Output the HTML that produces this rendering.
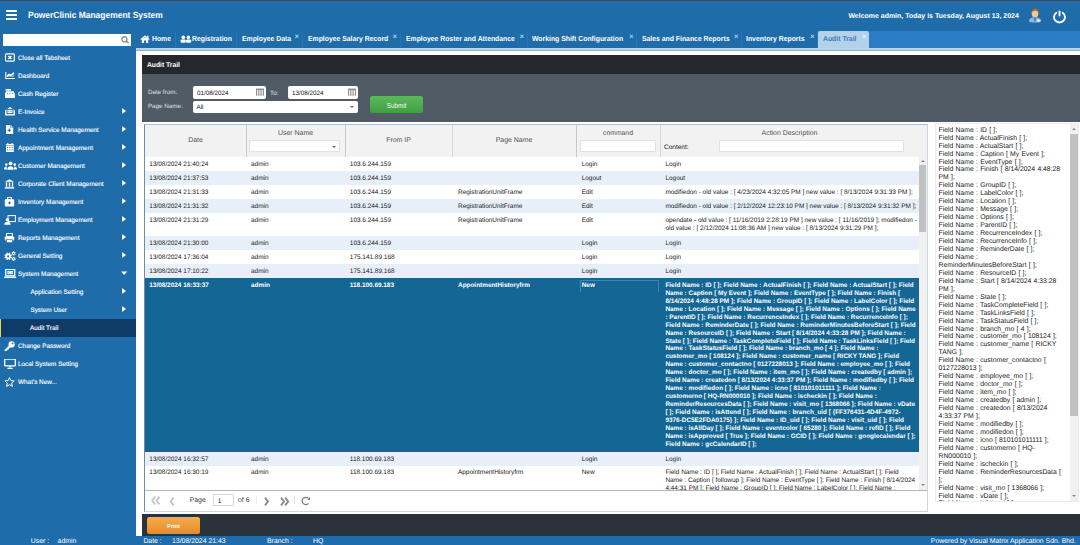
<!DOCTYPE html>
<html><head><meta charset="utf-8">
<style>
*{margin:0;padding:0;box-sizing:border-box}
html,body{width:1080px;height:545px;overflow:hidden;background:#fff}
body{font-family:"Liberation Sans",sans-serif;position:relative;text-rendering:geometricPrecision}
.a{position:absolute}
.t{position:absolute;white-space:nowrap;line-height:10px}
#hdr{left:0;top:0;width:1080px;height:31px;background:linear-gradient(#234f74 0,#234f74 1px,#35668c 1px,#35668c 2px,#2a6ca3 2px,#2a6ca3 3px,#1f6cab 3px)}
#side{left:0;top:31px;width:136px;height:505px;background:#1f6cab}
#tabs{left:136px;top:31px;width:944px;height:17px;background:#2a7cc6}
.tab{position:absolute;top:0;height:17px;background:#1f6cab;border-right:1px solid #2a74ba}
.tab span{position:absolute;top:2.8px;line-height:10px;font-size:7.3px;transform:scaleX(0.938);transform-origin:0 0;font-weight:bold;color:#fff;white-space:nowrap}
.tab i{position:absolute;top:1.9px;font-style:normal;font-size:8px;color:#dce9f6;line-height:8px}
.mi{position:absolute;left:0;width:136px;height:18px}
.mi span{position:absolute;left:18px;top:4.7px;line-height:10px;font-size:6.4px;color:#fff;white-space:nowrap;-webkit-text-stroke:0.12px #fff}
.mi svg{position:absolute;left:4px;top:4px}
.arr{position:absolute;left:121.9px;top:5.5px;width:0;height:0;border-top:3.5px solid transparent;border-bottom:3.5px solid transparent;border-left:4px solid #fff}
#status{left:0;top:535.5px;width:1080px;height:10px;background:#1f6cad}
#status .t{font-size:6.9px;color:#fff;top:1.1px;line-height:10px}
.row{position:absolute;left:145px;width:774px;height:14px}
.row span{position:absolute;top:3px;line-height:10px;font-size:6.45px;color:#1a1a1a;white-space:nowrap}
.alt{background:#e7eff8}
.sel{background:#146695}
.sel span{color:#fff;font-weight:bold;font-size:6.41px}
.ml span{line-height:8px}
</style></head><body>

<!-- header -->
<div id="hdr" class="a"></div>
<div class="a" style="left:5.8px;top:10px;width:11.4px;height:2px;background:#fff;border-radius:0.5px"></div>
<div class="a" style="left:5.8px;top:14px;width:11.4px;height:2px;background:#fff;border-radius:0.5px"></div>
<div class="a" style="left:5.8px;top:18px;width:11.4px;height:2px;background:#fff;border-radius:0.5px"></div>
<div class="t" style="left:27.5px;top:9.5px;font-size:9px;font-weight:bold;color:#fff;transform:scaleX(0.939);transform-origin:0 0">PowerClinic Management System</div>
<div class="t" style="left:848.4px;top:11.8px;font-size:6.98px;font-weight:bold;color:#fff">Welcome admin, Today is Tuesday, August 13, 2024</div>
<svg class="a" style="left:1028px;top:7px" width="14" height="17" viewBox="0 0 14 17">
  <path d="M0.9 14.2 Q1.2 11.4 4.6 10.6 L9.4 10.6 Q12.8 11.4 13.1 14.2 Q12.6 15.6 7 15.6 Q1.4 15.6 0.9 14.2 Z" fill="#8db6e6"/>
  <path d="M9.2 12.6 Q11.5 12.4 12.6 14 Q11.2 15.2 9 14.6 Z" fill="#eef5fc"/>
  <path d="M6.2 10.6 L7.8 10.6 L7.4 14.2 L6.6 14.2 Z" fill="#34557f"/>
  <ellipse cx="7" cy="6.6" rx="3.3" ry="4" fill="#f4c98c"/>
  <path d="M3.6 6.2 Q3.2 1.6 7 1.6 Q10.8 1.6 10.4 6.2 Q10 3.8 7.4 3.8 Q4.6 3.6 3.6 6.2 Z" fill="#b5692f"/>
</svg>
<svg class="a" style="left:1052px;top:9.4px" width="15" height="15" viewBox="0 0 15 15">
  <path d="M4.4 3.8 A5.5 5.3 0 1 0 10.6 3.8" fill="none" stroke="#fff" stroke-width="1.9" stroke-linecap="round"/>
  <line x1="7.5" y1="2.4" x2="7.5" y2="6.6" stroke="#fff" stroke-width="1.9" stroke-linecap="round"/>
</svg>

<!-- sidebar -->
<div id="side" class="a"></div>
<div class="a" style="left:2.6px;top:34px;width:128.4px;height:12px;background:#fff"></div>
<svg class="a" style="left:120px;top:35px" width="10" height="10" viewBox="0 0 10 10">
  <circle cx="4.4" cy="4.35" r="2.6" fill="none" stroke="#8a8a8a" stroke-width="1.3"/>
  <line x1="6.2" y1="6.2" x2="8.6" y2="7.9" stroke="#8a8a8a" stroke-width="1.6"/>
</svg>

<div id="menu">
<div class="mi" style="top:49px"><svg width="12" height="10" viewBox="0 0 12 10"><rect x="1.5" y="0.8" width="8.8" height="7.4" rx="1" fill="none" stroke="#fff" stroke-width="1.2"/><path d="M4.4 3 L7.4 6 M7.4 3 L4.4 6" stroke="#fff" stroke-width="1.4"/></svg><span>Close all Tabsheet</span></div>
<div class="mi" style="top:67px"><svg width="12" height="10" viewBox="0 0 12 10"><path d="M1.8 1 V7.5 H10.8" fill="none" stroke="#fff" stroke-width="1.1"/><path d="M3 5.6 L5 3.6 L6.8 4.8 L9.6 2.2 L9.6 1.6 L10.2 1.8 L10.2 6 L3 6 Z" fill="#fff" opacity="0.35"/><path d="M3 5.4 L5 3.4 L6.8 4.6 L9.8 1.8" fill="none" stroke="#fff" stroke-width="1.5"/></svg><span>Dashboard</span></div>
<div class="mi" style="top:85px"><svg width="12" height="10" viewBox="0 0 12 10"><rect x="1.6" y="0" width="5.4" height="1.6" fill="#fff"/><rect x="3.6" y="1.4" width="1.4" height="1.2" fill="#fff"/><path d="M1.8 2.3 H9.6 L10.9 5 V8.9 H1 V5 Z" fill="#fff"/><circle cx="3.6" cy="4.6" r="0.55" fill="#1f6cab"/><circle cx="5.9" cy="4.6" r="0.55" fill="#1f6cab"/><circle cx="8.2" cy="4.6" r="0.55" fill="#1f6cab"/></svg><span>Cash Register</span></div>
<div class="mi" style="top:103px"><svg width="12" height="10" viewBox="0 0 12 10"><path d="M1 3.6 L5.95 0.1 L10.9 3.6 V8.6 H1 Z" fill="#fff"/><rect x="3" y="2.4" width="5.9" height="4.2" fill="#fff" stroke="#1f6cab" stroke-width="1"/><rect x="4" y="3.8" width="3.9" height="0.9" fill="#1f6cab" opacity="0.6"/></svg><span>E-Invoice</span></div>
<div class="arr" style="top:107.6px"></div>
<div class="mi" style="top:121px"><svg width="12" height="10" viewBox="0 0 12 10"><path d="M2 0 H6.8 L9.2 2.4 V9 H2 Z" fill="#fff"/><path d="M6.6 0 V2.6 H9.2" fill="none" stroke="#1f6cab" stroke-width="0.6"/><path d="M7 5.3 H3.6 M5.3 3.6 V7" stroke="#1f6cab" stroke-width="1.1"/></svg><span>Health Service Management</span></div>
<div class="arr" style="top:125.6px"></div>
<div class="mi" style="top:139px"><svg width="12" height="10" viewBox="0 0 12 10"><rect x="2" y="1" width="7.8" height="8" rx="0.5" fill="#fff"/><rect x="3.2" y="0" width="1.2" height="1.8" fill="#fff"/><rect x="7.4" y="0" width="1.2" height="1.8" fill="#fff"/><path d="M2 2.6 H9.8" stroke="#1f6cab" stroke-width="0.5"/><g fill="#1f6cab"><rect x="3" y="4" width="1.2" height="0.9"/><rect x="5.3" y="4" width="1.2" height="0.9"/><rect x="7.6" y="4" width="1.2" height="0.9"/><rect x="3" y="6.4" width="1.2" height="0.9"/><rect x="5.3" y="6.4" width="1.2" height="0.9"/><rect x="7.6" y="6.4" width="1.2" height="0.9"/></g></svg><span>Appointment Management</span></div>
<div class="arr" style="top:143.6px"></div>
<div class="mi" style="top:157px"><svg width="13" height="10" viewBox="0 0 13 10"><circle cx="6.5" cy="2.4" r="1.9" fill="#fff"/><path d="M3.3 8.8 Q3.3 5.2 6.5 5.2 Q9.7 5.2 9.7 8.8 Z" fill="#fff"/><circle cx="2.3" cy="3.6" r="1.3" fill="#fff"/><circle cx="10.7" cy="3.6" r="1.3" fill="#fff"/><path d="M0 8.5 Q0 5.6 2.6 5.6 L3 8.5 Z M13 8.5 Q13 5.6 10.4 5.6 L10 8.5 Z" fill="#fff"/></svg><span>Customer Management</span></div>
<div class="arr" style="top:161.6px"></div>
<div class="mi" style="top:175px"><svg width="11" height="10" viewBox="0 0 11 10"><path d="M0.8 2.8 L5.5 0.3 L10.2 2.8 Z" fill="#fff"/><rect x="1.8" y="3.4" width="1.4" height="4.4" fill="#fff"/><rect x="4.8" y="3.4" width="1.4" height="4.4" fill="#fff"/><rect x="7.8" y="3.4" width="1.4" height="4.4" fill="#fff"/><rect x="0.8" y="8.2" width="9.4" height="1.4" fill="#fff"/></svg><span>Corporate Client Management</span></div>
<div class="arr" style="top:179.6px"></div>
<div class="mi" style="top:193px"><svg width="11" height="10" viewBox="0 0 11 10"><rect x="0.8" y="2.2" width="9.4" height="7.4" rx="0.8" fill="#fff"/><rect x="3.6" y="0.4" width="3.8" height="2.4" fill="none" stroke="#fff" stroke-width="1"/><path d="M5.5 4.2 L6.8 5.9 L5.5 7.6 L4.2 5.9 Z" fill="#1f6cab"/></svg><span>Inventory Management</span></div>
<div class="arr" style="top:197.6px"></div>
<div class="mi" style="top:211px"><svg width="12" height="10" viewBox="0 0 12 10"><rect x="4" y="0.6" width="7.4" height="6" fill="none" stroke="#fff" stroke-width="1"/><circle cx="3.4" cy="4.8" r="1.7" fill="#fff"/><path d="M0.2 9.8 Q0.2 6.8 3.4 6.8 Q6.6 6.8 6.6 9.8 Z" fill="#fff"/></svg><span>Employment Management</span></div>
<div class="arr" style="top:215.6px"></div>
<div class="mi" style="top:229px"><svg width="11" height="10" viewBox="0 0 11 10"><rect x="2.6" y="0.4" width="5.8" height="3" fill="none" stroke="#fff" stroke-width="1"/><rect x="0.8" y="3.6" width="9.4" height="4" rx="1" fill="#fff"/><rect x="2.6" y="6.4" width="5.8" height="3.2" fill="#fff" stroke="#1f6cab" stroke-width="0.6"/></svg><span>Reports Management</span></div>
<div class="arr" style="top:233.6px"></div>
<div class="mi" style="top:247px"><svg width="13" height="10" viewBox="0 0 13 10"><path d="M7.10 5.30 L7.07 5.74 L8.01 6.14 L7.48 7.40 L6.54 7.01 L6.25 7.35 L5.91 7.64 L6.30 8.58 L5.04 9.11 L4.64 8.17 L4.20 8.20 L3.76 8.17 L3.36 9.11 L2.10 8.58 L2.49 7.64 L2.15 7.35 L1.86 7.01 L0.92 7.40 L0.39 6.14 L1.33 5.74 L1.30 5.30 L1.33 4.86 L0.39 4.46 L0.92 3.20 L1.86 3.59 L2.15 3.25 L2.49 2.96 L2.10 2.02 L3.36 1.49 L3.76 2.43 L4.20 2.40 L4.64 2.43 L5.04 1.49 L6.30 2.02 L5.91 2.96 L6.25 3.25 L6.54 3.59 L7.48 3.20 L8.01 4.46 L7.07 4.86 Z" fill="#fff"/><circle cx="4.2" cy="5.3" r="1.1" fill="#1f6cab"/><path d="M11.10 2.40 L11.07 2.70 L11.71 3.02 L11.20 3.91 L10.60 3.52 L10.35 3.70 L10.07 3.82 L10.11 4.54 L9.09 4.54 L9.13 3.82 L8.85 3.70 L8.60 3.52 L8.00 3.91 L7.49 3.02 L8.13 2.70 L8.10 2.40 L8.13 2.10 L7.49 1.78 L8.00 0.89 L8.60 1.28 L8.85 1.10 L9.13 0.98 L9.09 0.26 L10.11 0.26 L10.07 0.98 L10.35 1.10 L10.60 1.28 L11.20 0.89 L11.71 1.78 L11.07 2.10 Z" fill="#fff"/><circle cx="9.6" cy="2.4" r="0.7" fill="#1f6cab"/><path d="M11.10 7.90 L11.07 8.20 L11.71 8.52 L11.20 9.41 L10.60 9.02 L10.35 9.20 L10.07 9.32 L10.11 10.04 L9.09 10.04 L9.13 9.32 L8.85 9.20 L8.60 9.02 L8.00 9.41 L7.49 8.52 L8.13 8.20 L8.10 7.90 L8.13 7.60 L7.49 7.28 L8.00 6.39 L8.60 6.78 L8.85 6.60 L9.13 6.48 L9.09 5.76 L10.11 5.76 L10.07 6.48 L10.35 6.60 L10.60 6.78 L11.20 6.39 L11.71 7.28 L11.07 7.60 Z" fill="#fff"/><circle cx="9.6" cy="7.9" r="0.7" fill="#1f6cab"/></svg><span>General Setting</span></div>
<div class="arr" style="top:251.6px"></div>
<div class="mi" style="top:265px"><svg width="13" height="10" viewBox="0 0 13 10"><rect x="1.7" y="0.4" width="9" height="6.4" fill="none" stroke="#fff" stroke-width="1.3"/><rect x="3.4" y="2" width="5.6" height="3.2" fill="#fff"/><path d="M5.4 2.6 L4.4 3.6 L5.4 4.6 M7 2.6 L8 3.6 L7 4.6" fill="none" stroke="#1f6cab" stroke-width="0.7"/><rect x="0.2" y="7.6" width="12" height="1.4" fill="#fff"/></svg><span>System Management</span></div>
<svg class="a" style="left:120px;top:270px" width="8" height="6" viewBox="0 0 8 6"><path d="M1.2 1.6 H7.2 L4.2 5 Z" fill="#fff"/></svg>
<div class="mi" style="top:283px"><span style="left:30.4px">Application Setting</span></div>
<div class="arr" style="top:287.6px"></div>
<div class="mi" style="top:301px"><span style="left:30.4px">System User</span></div>
<div class="arr" style="top:305.6px"></div>
<div class="mi" style="top:319px;background:#0f3b69;border-left:1.5px solid #e8d84a"><span style="left:28.9px">Audit Trail</span></div>
<div class="mi" style="top:337px"><svg width="12" height="10" viewBox="0 0 12 10"><circle cx="7.6" cy="3.4" r="3.1" fill="#fff"/><circle cx="8.6" cy="2.4" r="0.9" fill="#1f6cab"/><path d="M5.6 5.4 L1.6 9.2" stroke="#fff" stroke-width="2.1" stroke-linecap="round"/><path d="M3.2 7.8 L4.2 8.8" stroke="#fff" stroke-width="1.3"/></svg><span>Change Password</span></div>
<div class="mi" style="top:355px"><svg width="12" height="10" viewBox="0 0 12 10"><rect x="0.7" y="0.2" width="10.6" height="6.6" rx="0.6" fill="none" stroke="#fff" stroke-width="1.3"/><path d="M6 6.8 V8.6 M3.4 9.3 H8.6" stroke="#fff" stroke-width="1.3"/></svg><span>Local System Setting</span></div>
<div class="mi" style="top:373px"><svg width="11" height="10" viewBox="0 0 11 10"><path d="M5.5 0.6 L6.9 3.6 L10.2 3.9 L7.7 6.1 L8.4 9.4 L5.5 7.7 L2.6 9.4 L3.3 6.1 L0.8 3.9 L4.1 3.6 Z" fill="none" stroke="#fff" stroke-width="1"/></svg><span>What's New...</span></div>
</div>

<!-- tabs -->
<div id="tabs" class="a"></div>
<div class="a" style="left:136px;top:31px;width:944px;height:17px">
  <div class="tab" style="left:0;width:40px"><svg class="a" style="left:4px;top:4.4px" width="10" height="8" viewBox="0 0 10 8"><path d="M0.3 4.2 L5 0.2 L9.7 4.2 L8.8 5 L5 1.8 L1.2 5 Z" fill="#fff"/><path d="M1.8 4.4 L5 1.9 L8.2 4.4 V8 H6 V5.6 H4 V8 H1.8 Z" fill="#fff"/><rect x="7.2" y="0.6" width="1.2" height="2.4" fill="#fff"/></svg><span style="left:15.8px">Home</span></div>
  <div class="tab" style="left:40px;width:61px"><svg class="a" style="left:3.5px;top:4.4px" width="12" height="9" viewBox="0 0 12 9"><circle cx="3.3" cy="2.4" r="1.8" fill="#fff"/><circle cx="8.4" cy="2.4" r="1.8" fill="#fff"/><rect x="0.6" y="4.4" width="5.2" height="3.4" rx="1.2" fill="#fff"/><rect x="6" y="4.4" width="5.2" height="3.4" rx="1.2" fill="#fff"/></svg><span style="left:15.6px">Registration</span></div>
  <div class="tab" style="left:101px;width:65.5px"><span style="left:5px">Employee Data</span><i style="left:57.5px">×</i></div>
  <div class="tab" style="left:166.5px;width:98px"><span style="left:5.5px">Employee Salary Record</span><i style="left:90px">×</i></div>
  <div class="tab" style="left:264.5px;width:127px"><span style="left:5.5px">Employee Roster and Attendance</span><i style="left:119px">×</i></div>
  <div class="tab" style="left:391.5px;width:109.5px"><span style="left:4.5px">Working Shift Configuration</span><i style="left:101.5px">×</i></div>
  <div class="tab" style="left:501px;width:105px"><span style="left:4.6px">Sales and Finance Reports</span><i style="left:96.8px">×</i></div>
  <div class="tab" style="left:606px;width:76px"><span style="left:4.4px">Inventory Reports</span><i style="left:68px">×</i></div>
  <div class="tab" style="left:682.2px;width:50.5px;background:#b4d1ea;border-right:0;border-radius:2px 2px 0 0"><span style="left:4.6px;color:#3c7cbb">Audit Trail</span><i style="left:43.5px;color:#fff">×</i></div>
</div>
<div class="a" style="left:136px;top:48px;width:944px;height:2.2px;background:#b7d3ec"></div>
<div class="a" style="left:136px;top:50.2px;width:944px;height:0.8px;background:#8fb0cc"></div>

<!-- title + filter panel -->
<div class="a" style="left:142px;top:55px;width:938px;height:19px;background:#24282d"></div>
<div class="t" style="left:147px;top:60.4px;font-size:7.1px;font-weight:bold;color:#fff;transform:scaleX(0.95);transform-origin:0 0">Audit Trail</div>
<div class="a" style="left:142px;top:74px;width:938px;height:47.5px;background:#505b66"></div>
<div class="t" style="left:147.9px;top:87.6px;font-size:6.27px;color:#dfe3e8">Date from:</div>
<div class="t" style="left:147.9px;top:102.2px;font-size:6.27px;color:#dfe3e8">Page Name:</div>
<div class="a" style="left:193.2px;top:86px;width:73px;height:12.6px;background:#fff;border-radius:2px"></div>
<div class="t" style="left:197px;top:88.8px;font-size:6.3px;color:#111">01/08/2024</div>
<div class="t" style="left:270px;top:88.8px;font-size:6.3px;color:#dfe3e8">To:</div>
<div class="a" style="left:288.1px;top:86px;width:70px;height:12.6px;background:#fff;border-radius:2px"></div>
<div class="t" style="left:292px;top:88.8px;font-size:6.3px;color:#111">13/08/2024</div>
<svg class="a" style="left:256.2px;top:88.4px" width="8" height="8" viewBox="0 0 8 8"><rect x="0" y="0.6" width="8" height="1.4" fill="#8a8a8a"/><path d="M0.6 2V7.4M2.8 2V7.4M5.1 2V7.4M7.4 2V7.4" stroke="#8a8a8a" stroke-width="1.1"/><path d="M0 7H8" stroke="#8a8a8a" stroke-width="0.7" stroke-dasharray="1.2 1"/></svg>
<svg class="a" style="left:348px;top:88.4px" width="8" height="8" viewBox="0 0 8 8"><rect x="0" y="0.6" width="8" height="1.4" fill="#8a8a8a"/><path d="M0.6 2V7.4M2.8 2V7.4M5.1 2V7.4M7.4 2V7.4" stroke="#8a8a8a" stroke-width="1.1"/><path d="M0 7H8" stroke="#8a8a8a" stroke-width="0.7" stroke-dasharray="1.2 1"/></svg>
<div class="a" style="left:193.2px;top:101.2px;width:164.8px;height:11.8px;background:#fff;border-radius:2px"></div>
<div class="t" style="left:196.5px;top:102.8px;font-size:6.3px;color:#111">All</div>
<div class="a" style="left:350px;top:106px;width:0;height:0;border-left:2.5px solid transparent;border-right:2.5px solid transparent;border-top:2.5px solid #666"></div>
<div class="a" style="left:370px;top:96px;width:53px;height:17px;border-radius:2.5px;background:linear-gradient(#5cb85c,#419f41)"></div>
<div class="t" style="left:370px;top:100.8px;width:53px;text-align:center;font-size:7.2px;color:#f4fff0;transform:scaleX(0.875)">Submit</div>

<!-- grid -->
<div class="a" style="left:144px;top:124px;width:783.5px;height:387.5px;border:1px solid #ccd7e2;border-top-color:#a9c3dc;border-left-color:#6a8db0;background:#fff"></div>
<div class="a" style="left:145px;top:125px;width:781.5px;height:31.5px;background:#f2f2f2"></div>
<div class="a" style="left:246.3px;top:125px;width:0.8px;height:31.5px;background:#c8c8c8"></div>
<div class="a" style="left:345.2px;top:125px;width:0.8px;height:31.5px;background:#c8c8c8"></div>
<div class="a" style="left:452px;top:125px;width:0.8px;height:31.5px;background:#d6d6d6"></div>
<div class="a" style="left:576.3px;top:125px;width:0.8px;height:31.5px;background:#c8c8c8"></div>
<div class="a" style="left:660.1px;top:125px;width:0.8px;height:31.5px;background:#d6d6d6"></div>
<div class="t" style="left:145px;top:136.3px;width:101px;text-align:center;font-size:6.95px;color:#505050">Date</div>
<div class="t" style="left:246px;top:129px;width:99px;text-align:center;font-size:6.95px;color:#505050">User Name</div>
<div class="a" style="left:249.4px;top:140.4px;width:91px;height:11.8px;background:#fff;border:1px solid #e2e2e2"></div>
<div class="a" style="left:332px;top:145.5px;width:0;height:0;border-left:2.5px solid transparent;border-right:2.5px solid transparent;border-top:2.5px solid #666"></div>
<div class="t" style="left:345px;top:136.3px;width:107px;text-align:center;font-size:6.95px;color:#505050">From IP</div>
<div class="t" style="left:452px;top:136.3px;width:124px;text-align:center;font-size:6.95px;color:#505050">Page Name</div>
<div class="t" style="left:576px;top:129px;width:84px;text-align:center;font-size:6.8px;color:#505050">command</div>
<div class="a" style="left:580px;top:140.2px;width:76px;height:11.8px;background:#fff;border:1px solid #e2e2e2"></div>
<div class="t" style="left:660px;top:129px;width:259px;text-align:center;font-size:6.95px;color:#505050">Action Description</div>
<div class="t" style="left:664px;top:143px;font-size:6.5px;color:#111">Content:</div>
<div class="a" style="left:719px;top:140.2px;width:185.4px;height:11.8px;background:#fff;border:1px solid #e2e2e2"></div>

<div class="a" style="left:145px;top:156.5px;width:774px;height:333.5px;overflow:hidden">
<div id="rows" class="a" style="left:-145px;top:-156.5px;width:1080px;height:545px">
<div class="row" style="top:156.5px"><span style="left:4.3px">13/08/2024 21:40:24</span><span style="left:106px">admin</span><span style="left:204.8px">103.6.244.159</span><span style="left:436.7px">Login</span><span style="left:520.4px">Login</span></div>
<div class="row alt" style="top:170.6px"><span style="left:4.3px">13/08/2024 21:37:53</span><span style="left:106px">admin</span><span style="left:204.8px">103.6.244.159</span><span style="left:436.7px">Logout</span><span style="left:520.4px">Logout</span></div>
<div class="row" style="top:184.7px"><span style="left:4.3px">13/08/2024 21:31:33</span><span style="left:106px">admin</span><span style="left:204.8px">103.6.244.159</span><span style="left:313px">RegistrationUnitFrame</span><span style="left:436.7px">Edit</span><span style="left:520.4px">modifiedon - old value : [ 4/23/2024 4:32:05 PM ] new value : [ 8/13/2024 9:31:33 PM ];</span></div>
<div class="row alt" style="top:198.8px"><span style="left:4.3px">13/08/2024 21:31:32</span><span style="left:106px">admin</span><span style="left:204.8px">103.6.244.159</span><span style="left:313px">RegistrationUnitFrame</span><span style="left:436.7px">Edit</span><span style="left:520.4px">modifiedon - old value : [ 2/12/2024 12:23:10 PM ] new value : [ 8/13/2024 9:31:32 PM ];</span></div>
<div class="row ml" style="top:213px;height:22.9px"><span style="left:4.3px;top:4px">13/08/2024 21:31:29</span><span style="left:106px;top:4px">admin</span><span style="left:204.8px;top:4px">103.6.244.159</span><span style="left:313px;top:4px">RegistrationUnitFrame</span><span style="left:436.7px;top:4px">Edit</span><span style="left:520.4px;top:4px;line-height:7.8px">opendate - old value : [ 11/16/2019 2:28:19 PM ] new value : [ 11/16/2019 ]; modifiedon -<br>old value : [ 2/12/2024 11:08:36 AM ] new value : [ 8/13/2024 9:31:29 PM ];</span></div>
<div class="row alt" style="top:235.9px"><span style="left:4.3px">13/08/2024 21:30:00</span><span style="left:106px">admin</span><span style="left:204.8px">103.6.244.159</span><span style="left:436.7px">Login</span><span style="left:520.4px">Login</span></div>
<div class="row" style="top:249.8px"><span style="left:4.3px">13/08/2024 17:36:04</span><span style="left:106px">admin</span><span style="left:204.8px">175.141.89.168</span><span style="left:436.7px">Login</span><span style="left:520.4px">Login</span></div>
<div class="row alt" style="top:264px"><span style="left:4.3px">13/08/2024 17:10:22</span><span style="left:106px">admin</span><span style="left:204.8px">175.141.89.168</span><span style="left:436.7px">Login</span><span style="left:520.4px">Login</span></div>
<div class="row sel ml" style="top:278.3px;height:173.5px"><span style="left:4.3px;top:3.8px">13/08/2024 16:33:37</span><span style="left:106px;top:3.8px">admin</span><span style="left:204.8px;top:3.8px">118.100.69.183</span><span style="left:313px;top:3.8px">AppointmentHistoryfrm</span><div class="a" style="left:435px;top:2px;width:79px;height:12px;border:1px solid #3f85b5;border-bottom:0"></div><span style="left:436.7px;top:3.8px">New</span><span style="left:520.4px;top:3.8px;line-height:7.92px">Field Name : ID [ ]; Field Name : ActualFinish [ ]; Field Name : ActualStart [ ]; Field<br>Name : Caption [ My Event ]; Field Name : EventType [ ]; Field Name : Finish [<br>8/14/2024 4:48:28 PM ]; Field Name : GroupID [ ]; Field Name : LabelColor [ ]; Field<br>Name : Location [ ]; Field Name : Message [ ]; Field Name : Options [ ]; Field Name<br>: ParentID [ ]; Field Name : RecurrenceIndex [ ]; Field Name : RecurrenceInfo [ ];<br>Field Name : ReminderDate [ ]; Field Name : ReminderMinutesBeforeStart [ ]; Field<br>Name : ResourceID [ ]; Field Name : Start [ 8/14/2024 4:33:28 PM ]; Field Name :<br>State [ ]; Field Name : TaskCompleteField [ ]; Field Name : TaskLinksField [ ]; Field<br>Name : TaskStatusField [ ]; Field Name : branch_mo [ 4 ]; Field Name :<br>customer_mo [ 108124 ]; Field Name : customer_name [ RICKY TANG ]; Field<br>Name : customer_contactno [ 0127228013 ]; Field Name : employee_mo [ ]; Field<br>Name : doctor_mo [ ]; Field Name : item_mo [ ]; Field Name : createdby [ admin ];<br>Field Name : createdon [ 8/13/2024 4:33:37 PM ]; Field Name : modifiedby [ ]; Field<br>Name : modifiedon [ ]; Field Name : icno [ 810101011111 ]; Field Name :<br>customerno [ HQ-RN000010 ]; Field Name : ischeckin [ ]; Field Name :<br>ReminderResourcesData [ ]; Field Name : visit_mo [ 1368066 ]; Field Name : vDate<br>[ ]; Field Name : isAttend [ ]; Field Name : branch_uid [ {FF376431-4D4F-4972-<br>9376-DC5E2FDA0175} ]; Field Name : ID_uid [ ]; Field Name : visit_uid [ ]; Field<br>Name : isAllDay [ ]; Field Name : eventcolor [ 65280 ]; Field Name : refID [ ]; Field<br>Name : isApproved [ True ]; Field Name : GCID [ ]; Field Name : googlecalendar [ ];<br>Field Name : gcCalendarID [ ];</span></div>
<div class="row alt" style="top:451.8px"><span style="left:4.3px">13/08/2024 16:32:57</span><span style="left:106px">admin</span><span style="left:204.8px">118.100.69.183</span><span style="left:436.7px">Login</span><span style="left:520.4px">Login</span></div>
<div class="row ml" style="top:465.8px;height:40px"><span style="left:4.3px;top:3px">13/08/2024 16:30:19</span><span style="left:106px;top:3px">admin</span><span style="left:204.8px;top:3px">118.100.69.183</span><span style="left:313px;top:3px">AppointmentHistoryfrm</span><span style="left:436.7px;top:3px">New</span><span style="left:520.4px;top:3px">Field Name : ID [ ]; Field Name : ActualFinish [ ]; Field Name : ActualStart [ ]; Field<br>Name : Caption [ followup ]; Field Name : EventType [ ]; Field Name : Finish [ 8/14/2024<br>4:44:31 PM ]; Field Name : GroupID [ ]; Field Name : LabelColor [ ]; Field Name :</span></div>
</div>
</div>
<!-- grid scrollbar -->
<div class="a" style="left:918.5px;top:156.5px;width:8px;height:333.5px;background:#f1f1f1"></div>
<div class="a" style="left:919.4px;top:165px;width:6.4px;height:66.7px;background:#c1c1c1"></div>
<div class="a" style="left:920.5px;top:159.5px;width:0;height:0;border-left:2.2px solid transparent;border-right:2.2px solid transparent;border-bottom:2.2px solid #888"></div>
<div class="a" style="left:920.5px;top:483.5px;width:0;height:0;border-left:2.2px solid transparent;border-right:2.2px solid transparent;border-top:2.2px solid #888"></div>
<!-- pager -->
<div class="a" style="left:145px;top:490px;width:781.5px;height:0.9px;background:#b5b5b5"></div>
<svg class="a" style="left:150.6px;top:496.3px" width="10" height="9" viewBox="0 0 10 9"><path d="M4.2 0.6 L1.2 4.5 L4.2 8.4 M8.4 0.6 L5.4 4.5 L8.4 8.4" fill="none" stroke="#c4c4c4" stroke-width="1.8"/></svg>
<svg class="a" style="left:169px;top:496.5px" width="6" height="9" viewBox="0 0 6 9"><path d="M4.6 0.6 L1.6 4.5 L4.6 8.4" fill="none" stroke="#c4c4c4" stroke-width="1.8"/></svg>
<div class="t" style="left:189.7px;top:496.3px;font-size:6.9px;color:#333">Page</div>
<div class="a" style="left:213.4px;top:494.4px;width:20.6px;height:12px;background:#fff;border:1px solid #d8d8d8;border-radius:1px"></div>
<div class="t" style="left:217.8px;top:496.6px;font-size:6.45px;color:#111">1</div>
<div class="t" style="left:238px;top:496.3px;font-size:6.9px;color:#444">of 6</div>
<svg class="a" style="left:264px;top:496.5px" width="6" height="9" viewBox="0 0 6 9"><path d="M1 0.6 L4 4.5 L1 8.4" fill="none" stroke="#888" stroke-width="1.8"/></svg>
<svg class="a" style="left:279.5px;top:496.5px" width="10" height="9" viewBox="0 0 10 9"><path d="M1 0.6 L4 4.5 L1 8.4 M5.2 0.6 L8.2 4.5 L5.2 8.4" fill="none" stroke="#888" stroke-width="1.8"/></svg>
<div class="a" style="left:294px;top:496px;width:0.8px;height:7.5px;background:#e6e6e6"></div><div class="a" style="left:256px;top:496px;width:0.8px;height:7.5px;background:#eee"></div>
<svg class="a" style="left:301px;top:496px" width="11" height="10" viewBox="0 0 11 10"><path d="M7.5 2.4 A3.7 3.7 0 1 0 7.6 7.4" fill="none" stroke="#7a7a7a" stroke-width="1.25"/><path d="M8.9 1.1 L9.1 3.9 L6.3 3.7 Z" fill="#7a7a7a"/></svg>

<!-- textarea -->
<div class="a" style="left:934.5px;top:123.4px;width:144px;height:378.3px;background:#fff;border:1px solid #ececec;overflow:hidden">
<div class="t" style="left:3px;top:2.3px;font-size:6.83px;color:#1a1a1a;line-height:7.946px;word-spacing:0.35px">Field Name : ID [ ];<br>Field Name : ActualFinish [ ];<br>Field Name : ActualStart [ ];<br>Field Name : Caption [ My Event ];<br>Field Name : EventType [ ];<br>Field Name : Finish [ 8/14/2024 4:48:28<br>PM ];<br>Field Name : GroupID [ ];<br>Field Name : LabelColor [ ];<br>Field Name : Location [ ];<br>Field Name : Message [ ];<br>Field Name : Options [ ];<br>Field Name : ParentID [ ];<br>Field Name : RecurrenceIndex [ ];<br>Field Name : RecurrenceInfo [ ];<br>Field Name : ReminderDate [ ];<br>Field Name :<br>ReminderMinutesBeforeStart [ ];<br>Field Name : ResourceID [ ];<br>Field Name : Start [ 8/14/2024 4:33:28<br>PM ];<br>Field Name : State [ ];<br>Field Name : TaskCompleteField [ ];<br>Field Name : TaskLinksField [ ];<br>Field Name : TaskStatusField [ ];<br>Field Name : branch_mo [ 4 ];<br>Field Name : customer_mo [ 108124 ];<br>Field Name : customer_name [ RICKY<br>TANG ];<br>Field Name : customer_contactno [<br>0127228013 ];<br>Field Name : employee_mo [ ];<br>Field Name : doctor_mo [ ];<br>Field Name : item_mo [ ];<br>Field Name : createdby [ admin ];<br>Field Name : createdon [ 8/13/2024<br>4:33:37 PM ];<br>Field Name : modifiedby [ ];<br>Field Name : modifiedon [ ];<br>Field Name : icno [ 810101011111 ];<br>Field Name : customerno [ HQ-<br>RN000010 ];<br>Field Name : ischeckin [ ];<br>Field Name : ReminderResourcesData [<br>];<br>Field Name : visit_mo [ 1368066 ];<br>Field Name : vDate [ ];<br>Field Name : isAttend [ ];</div>
<div class="a" style="left:134px;top:0;width:9px;height:377px;background:#f1f1f1"></div>
<div class="a" style="left:134.5px;top:9.3px;width:7.6px;height:282.2px;background:#c1c1c1"></div>
<div class="a" style="left:136.3px;top:4px;width:0;height:0;border-left:2.3px solid transparent;border-right:2.3px solid transparent;border-bottom:2.3px solid #888"></div>
<div class="a" style="left:136.3px;top:370.5px;width:0;height:0;border-left:2.3px solid transparent;border-right:2.3px solid transparent;border-top:2.3px solid #888"></div>
</div>

<!-- footer -->
<div class="a" style="left:142px;top:514px;width:938px;height:21.5px;background:#2c323a"></div>
<div class="a" style="left:147px;top:517px;width:53px;height:16.7px;border-radius:2.5px;background:linear-gradient(#f5ae4e,#e68a2a)"></div>
<div class="t" style="left:147px;top:522px;width:53px;text-align:center;font-size:5.5px;font-weight:bold;color:#fff">Print</div>

<div id="status" class="a">
<div class="t" style="left:30.8px">User :</div>
<div class="t" style="left:57.6px">admin</div>
<div class="t" style="left:143.4px">Date :</div>
<div class="t" style="left:172px">13/08/2024 21:43</div>
<div class="t" style="left:267px">Branch :</div>
<div class="t" style="left:313px">HQ</div>
<div class="t" style="left:930.8px">Powered by Visual Matrix Application Sdn. Bhd.</div>
</div>
</body></html>
